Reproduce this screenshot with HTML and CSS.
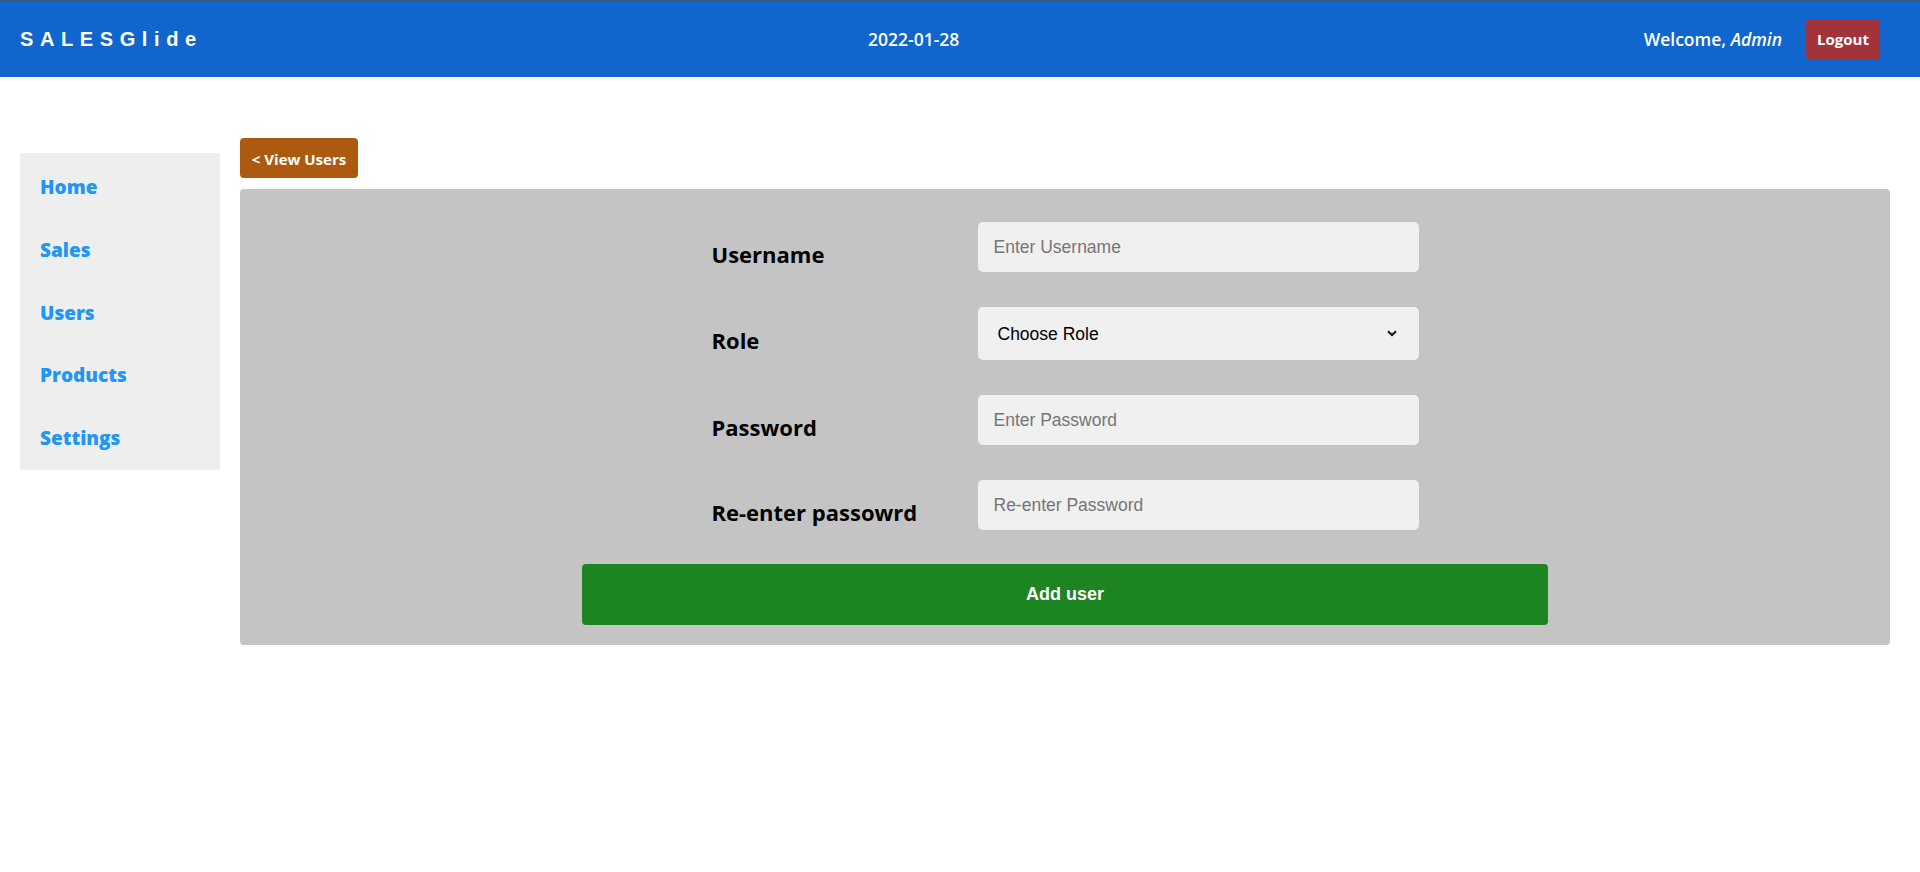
FILE: index.html
```html
<!DOCTYPE html>
<html lang="en">
<head>
<meta charset="utf-8">
<title>SALESGlide - Add User</title>
<link rel="stylesheet" href="styles.css">
</head>
<body>
<header class="topbar">
  <div class="brand">SALESGlide</div>
  <div class="date">2022-01-28</div>
  <div class="user-area">
    <span class="welcome">Welcome, <em>Admin</em></span>
    <button class="logout" type="button">Logout</button>
  </div>
</header>
<div class="layout">
  <nav class="sidebar">
    <a class="nav-link" href="#">Home</a>
    <a class="nav-link" href="#">Sales</a>
    <a class="nav-link" href="#">Users</a>
    <a class="nav-link" href="#">Products</a>
    <a class="nav-link" href="#">Settings</a>
  </nav>
  <main class="content">
    <button class="back-btn" type="button">&lt; View Users</button>
    <form class="panel">
      <div class="row">
        <label class="label">Username</label>
        <input class="field" type="text" placeholder="Enter Username">
      </div>
      <div class="row">
        <label class="label">Role</label>
        <div class="select-wrap">
          <select class="field select">
            <option>Choose Role</option>
          </select>
          <svg class="chev" width="10" height="7" viewBox="0 0 10 7"><path d="M1 1.2 L5 5 L9 1.2" fill="none" stroke="#111" stroke-width="2"/></svg>
        </div>
      </div>
      <div class="row">
        <label class="label">Password</label>
        <input class="field" type="password" placeholder="Enter Password">
      </div>
      <div class="row">
        <label class="label">Re-enter passowrd</label>
        <input class="field" type="password" placeholder="Re-enter Password">
      </div>
      <button class="submit" type="button">Add user</button>
    </form>
  </main>
</div>
</body>
</html>
```
FILE: styles.css
```css
* { box-sizing: border-box; }
body {
  margin: 0;
  background: #ffffff;
  font-family: "Open Sans", "Noto Sans", sans-serif;
}
.topbar {
  height: 77px;
  background: #1066cc;
  border-top: 1px solid #3a5878;
  display: flex;
  align-items: center;
  justify-content: space-between;
  padding: 0 40px 0 20px;
  color: #ffffff;
}
.brand {
  font-family: "Liberation Sans", Arial, sans-serif;
  font-weight: bold;
  font-size: 20px;
  letter-spacing: 6.6px;
}
.date {
  font-size: 17.5px;
  font-weight: 600;
  margin-right: 19px;
}
.user-area {
  display: flex;
  align-items: center;
  gap: 24px;
}
.welcome {
  font-size: 17.5px;
  font-weight: 600;
}
.welcome em { font-style: italic; }
.logout {
  background: #a3333a;
  color: #fff;
  border: none;
  border-radius: 4px;
  height: 41px;
  width: 74px;
  font-family: "Open Sans", sans-serif;
  font-weight: 700;
  font-size: 15px;
  padding: 0;
}
.layout {
  display: flex;
  gap: 20px;
  padding: 0 30px 0 20px;
  align-items: flex-start;
}
.sidebar {
  margin-top: 76px;
  width: 200px;
  background: #eeeeee;
  padding: 3px 0 0;
  display: flex;
  flex-direction: column;
}
.nav-link {
  display: block;
  height: 62.8px;
  line-height: 62.8px;
  padding-left: 20px;
  color: #2196f3;
  font-weight: 800;
  font-size: 19px;
  text-decoration: none;
}
.content {
  flex: 1;
  margin-top: 61px;
  display: flex;
  flex-direction: column;
  align-items: flex-start;
}
.back-btn {
  background: #ad5a11;
  color: #fff;
  border: none;
  border-radius: 4px;
  height: 40px;
  width: 118px;
  padding: 1px 0 0;
  font-family: "Open Sans", sans-serif;
  font-weight: 700;
  font-size: 15px;
}
.panel {
  margin-top: 11px;
  align-self: stretch;
  background: #c4c4c4;
  border-radius: 4px;
  padding: 33px 0 20px;
  display: flex;
  flex-direction: column;
  align-items: center;
  gap: 35px;
}
.row {
  display: grid;
  grid-template-columns: 266px 441px;
  align-items: center;
}
.label {
  font-weight: 700;
  font-size: 22px;
  color: #000;
  padding-top: 13px;
}
.field {
  width: 441px;
  height: 50px;
  border: none;
  border-radius: 5px;
  background: #f0f0f0;
  padding: 0 16px;
  font-family: "Liberation Sans", Arial, sans-serif;
  font-size: 17.5px;
  color: #000;
  outline: none;
}
.field::placeholder { color: #757575; }
.select-wrap { position: relative; }
.select {
  height: 53px;
  -webkit-appearance: none;
  appearance: none;
  padding-left: 20px;
}
.chev {
  position: absolute;
  right: 22px;
  top: 23px;
}
.submit {
  margin-top: -1px;
  width: 966px;
  height: 61px;
  background: #1c8421;
  color: #fff;
  border: none;
  border-radius: 4px;
  font-family: "Liberation Sans", Arial, sans-serif;
  font-weight: 700;
  font-size: 18px;
}
```
